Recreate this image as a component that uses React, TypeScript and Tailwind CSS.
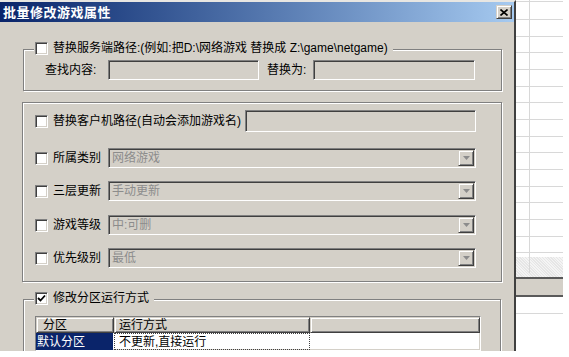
import type { ReactNode } from "react";

const FONT = "font-['Liberation_Sans','Noto_Sans_CJK_SC',sans-serif]";
const SUNKEN =
  "border border-t-[#808080] border-l-[#808080] border-r-white border-b-white shadow-[inset_1px_1px_0_#404040,inset_-1px_-1px_0_#d4d0c8]";
const RAISED =
  "border border-t-[#d4d0c8] border-l-[#d4d0c8] border-r-[#404040] border-b-[#404040] shadow-[inset_1px_1px_0_#ffffff,inset_-1px_-1px_0_#808080]";
const ETCHED = "border border-[#808080] shadow-[1px_1px_0_#ffffff,inset_1px_1px_0_#ffffff]";

function Check({ checked = false }: { checked?: boolean }) {
  return (
    <span className={`flex h-[13px] w-[13px] shrink-0 items-center justify-center bg-white ${SUNKEN}`}>
      {checked && (
        <svg width="9" height="9" viewBox="0 0 9 9">
          <path d="M1 4 L3.5 6.5 L8 1.5" fill="none" stroke="#000" strokeWidth="1.8" />
        </svg>
      )}
    </span>
  );
}

function Field({ w, h = "h-[20px]" }: { w: string; h?: string }) {
  return <div className={`${w} ${h} bg-[#d4d0c8] ${SUNKEN}`} />;
}

function Select({ value }: { value: string }) {
  return (
    <div className={`flex h-[20px] w-[368px] items-center justify-between bg-[#d4d0c8] pl-[3px] pr-[1px] ${SUNKEN}`}>
      <span className="text-[12px] leading-none text-[#8c8c8c]">{value}</span>
      <span className={`flex h-[16px] w-[16px] items-center justify-center bg-[#d4d0c8] ${RAISED}`}>
        <svg width="7" height="4" viewBox="0 0 7 4">
          <path d="M0 0 H7 L3.5 4 Z" fill="#8c8c8c" />
        </svg>
      </span>
    </div>
  );
}

function Legend({ checked = false, children }: { checked?: boolean; children: ReactNode }) {
  return (
    <div className="absolute left-[10px] top-[-9px] flex h-[14px] items-center gap-[5px] bg-[#d4d0c8] pl-[1px] pr-[5px]">
      <Check checked={checked} />
      <span className="text-[12px] leading-none">{children}</span>
    </div>
  );
}

function OptionRow({ label, value, mt }: { label: string; value: string; mt: string }) {
  return (
    <div className={`flex items-center ${mt}`}>
      <Check />
      <span className="ml-[5px] w-[55px] text-[12px] leading-none">{label}</span>
      <Select value={value} />
    </div>
  );
}

// spreadsheet grid showing behind the dialog
const GRID_ROWS = [2, 18, 17, 16, 17, 17, 16, 17, 17, 16, 17, 17, 16, 17, 17, 16];

export default function App() {
  return (
    <div className={`flex h-[357px] w-[569px] items-start overflow-hidden bg-white text-black ${FONT}`}>
      <div className="h-[351px] w-[516px] shrink-0 overflow-hidden border-r-2 border-t-2 border-r-[#404040] border-t-[#e8e6e2] bg-[#d4d0c8]">
        <div className="flex h-[20px] items-center justify-between bg-gradient-to-r from-[#0a246a] to-[#a6caf0] pl-[3px] pr-[2px]">
          <span className="text-[13px] font-bold leading-none tracking-[0.5px] text-white">批量修改游戏属性</span>
          <span className={`flex h-[14px] w-[16px] items-center justify-center bg-[#d4d0c8] ${RAISED}`}>
            <svg width="8" height="7" viewBox="0 0 8 7">
              <path d="M0.5 0.5 L7.5 6.5 M7.5 0.5 L0.5 6.5" stroke="#000" strokeWidth="1.6" />
            </svg>
          </span>
        </div>

        <div className={`relative ml-[23px] mt-[27px] h-[42px] w-[479px] ${ETCHED}`}>
          <Legend>替换服务端路径:(例如:把D:\网络游戏 替换成 Z:\game\netgame)</Legend>
          <div className="flex items-center pl-[21px] pt-[10px]">
            <span className="w-[63px] text-[12px] leading-none">查找内容:</span>
            <Field w="w-[151px]" />
            <span className="ml-[8px] w-[46px] text-[12px] leading-none">替换为:</span>
            <Field w="w-[162px]" />
          </div>
        </div>

        <div className={`ml-[22px] mt-[11px] h-[180px] w-[480px] pl-[12px] pt-[7px] ${ETCHED}`}>
          <div className="flex items-center">
            <Check />
            <span className="ml-[5px] w-[192px] text-[12px] leading-none">替换客户机路径(自动会添加游戏名)</span>
            <Field w="w-[231px]" h="h-[22px]" />
          </div>
          <OptionRow label="所属类别" value="网络游戏" mt="mt-[16px]" />
          <OptionRow label="三层更新" value="手动更新" mt="mt-[13px]" />
          <OptionRow label="游戏等级" value="中:可删" mt="mt-[14px]" />
          <OptionRow label="优先级别" value="最低" mt="mt-[13px]" />
        </div>

        <div className={`relative ml-[23px] mt-[17px] h-[80px] w-[478px] pl-[11px] pt-[16px] ${ETCHED}`}>
          <Legend checked>修改分区运行方式</Legend>
          <div className={`w-[446px] bg-white ${SUNKEN}`}>
            <div className="flex h-[16px] text-[12px] leading-none">
              <div className={`flex w-[78px] items-center bg-[#d4d0c8] pl-[6px] ${RAISED}`}>分区</div>
              <div className={`flex w-[196px] items-center bg-[#d4d0c8] pl-[4px] ${RAISED}`}>运行方式</div>
              <div className={`flex-1 bg-[#d4d0c8] ${RAISED}`} />
            </div>
            <div className="flex h-[17px] items-center text-[12px] leading-none">
              <div className="flex h-full w-[77px] items-center bg-[#0a246a] pl-[1px] text-white">默认分区</div>
              <div className="ml-[1px] flex h-full w-[196px] items-center border border-dotted border-[#404040] pl-[4px]">
                不更新,直接运行
              </div>
            </div>
          </div>
        </div>
      </div>

      <div className="flex h-[351px] w-[47px] flex-col bg-white">
        <div className="relative">
          <div className="absolute left-[13px] top-0 h-[273px] w-px bg-[#d8d8d8]" />
          {GRID_ROWS.map((h, i) => (
            <div
              key={i}
              className={`border-b border-[#d8d8d8] ${h === 2 ? "h-[2px]" : h === 18 ? "h-[18px]" : h === 17 ? "h-[17px]" : "h-[16px]"}`}
            />
          ))}
        </div>
        <div className="mt-[4px] h-[20px] bg-[repeating-linear-gradient(45deg,#e6e6e6_0px,#e6e6e6_1px,#f4f4f4_1px,#f4f4f4_2px)]" />
        <div className="h-[20px] border-y-2 border-[#5a5a5a] bg-[#d4d0c8]" />
        <div className="h-[17px] border-b border-[#d8d8d8]" />
      </div>
    </div>
  );
}
